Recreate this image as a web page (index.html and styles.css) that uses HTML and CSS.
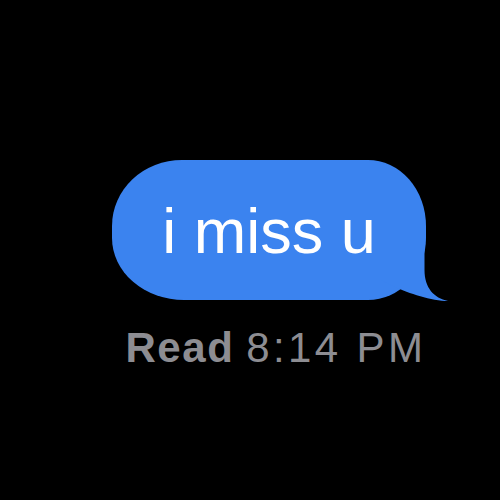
FILE: index.html
```html
<!DOCTYPE html>
<html>
<head>
<meta charset="utf-8">
<link rel="stylesheet" href="styles.css">
</head>
<body>
<div class="thread">
  <div class="bubble">
    <span class="msg">i miss u</span>
    <svg class="tail" width="80" height="80" viewBox="0 0 80 80">
      <path d="M0 0 L44.5 0 L44.5 40 C44.5 58 54 68 68 71 C52 71 28 63 15 57 L0 50 Z" fill="#3b83ef"/>
    </svg>
  </div>
  <div class="receipt"><b>Read</b> <span class="time">8:14 PM</span></div>
</div>
</body>
</html>
```
FILE: styles.css
```css
html, body {
  margin: 0;
  padding: 0;
  background: #000;
  height: 500px;
  overflow: hidden;
}
.thread {
  display: flex;
  flex-direction: column;
  align-items: flex-end;
  padding-top: 160px;
  padding-right: 74px;
}
.bubble {
  position: relative;
  box-sizing: border-box;
  width: 314px;
  height: 140px;
  padding-top: 40px;
  background: #3b83ef;
  border-radius: 70px 58px 58px 72px / 66px 66px 62px 62px;
  text-align: center;
}
.msg {
  display: block;
  font-family: "Liberation Sans", Arial, sans-serif;
  font-size: 63px;
  line-height: 62px;
  color: #fff;
}
.tail {
  position: absolute;
  left: 268px;
  top: 70px;
}
.receipt {
  margin-top: 27px;
  margin-right: 3px;
  font-family: "Liberation Sans", Arial, sans-serif;
  font-size: 42px;
  line-height: 42px;
  color: #8d8d92;
  white-space: nowrap;
}
.receipt b {
  font-weight: 700;
  letter-spacing: 1.6px;
}
.time {
  letter-spacing: 3.4px;
  margin-right: -3.4px;
}
```
